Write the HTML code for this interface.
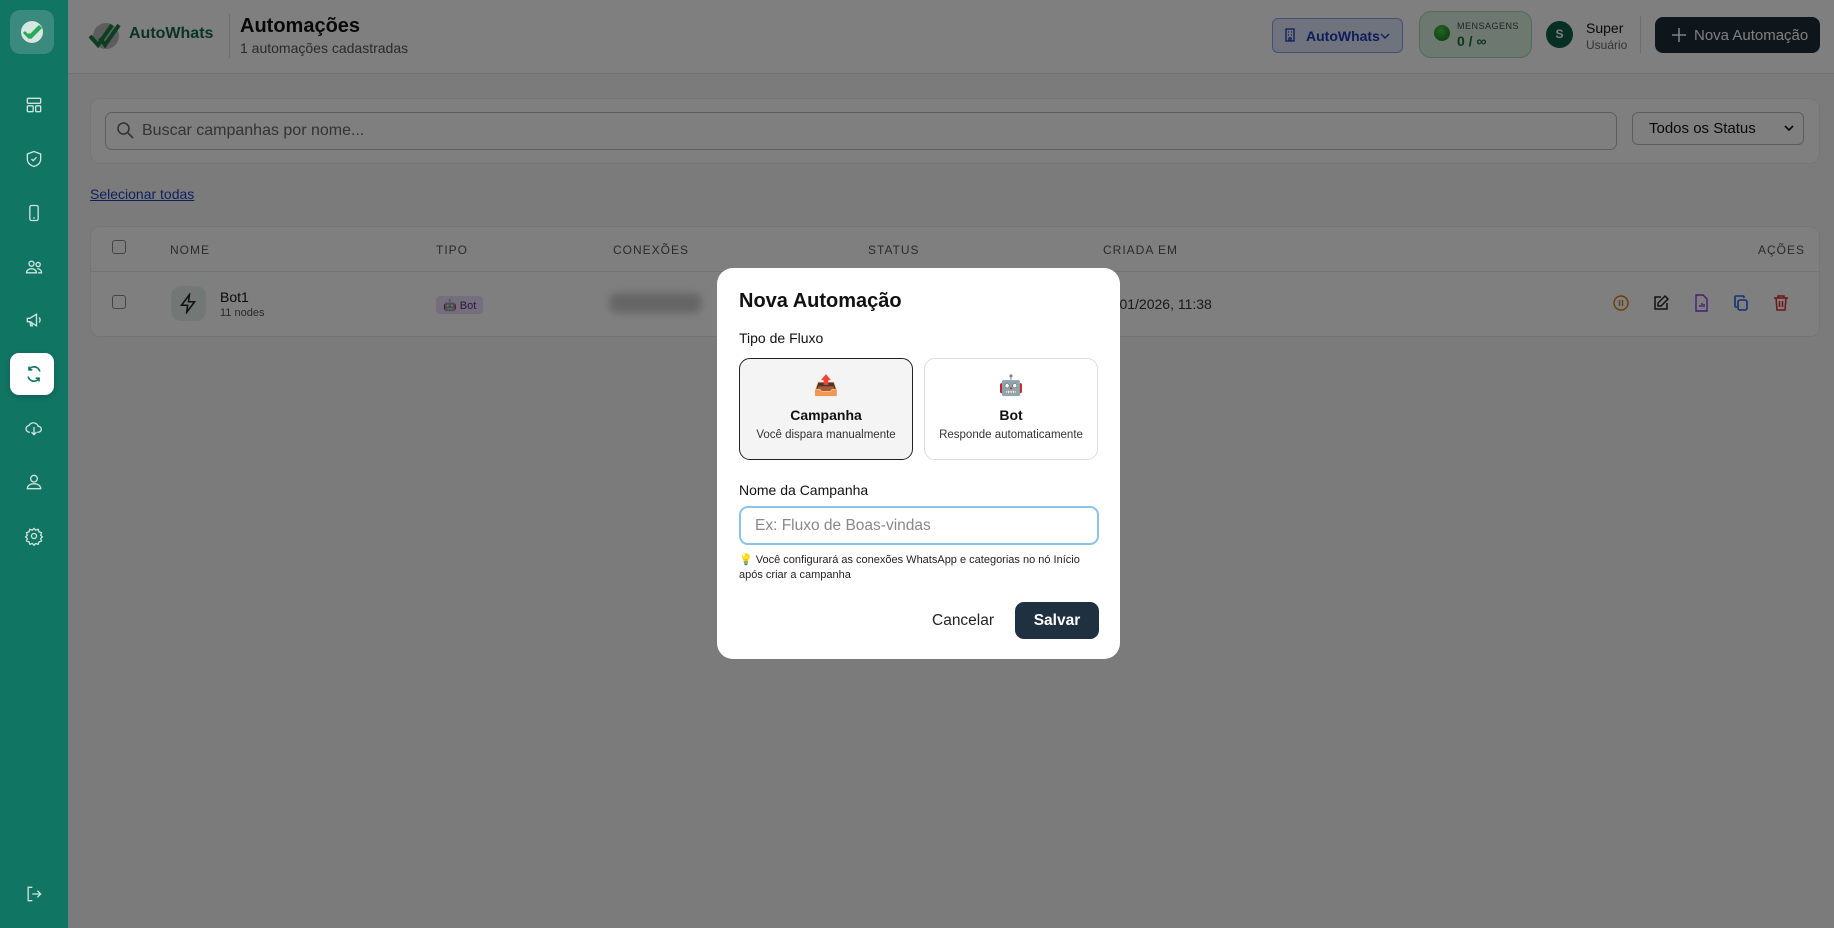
<!DOCTYPE html>
<html><head><meta charset="utf-8"><style>
*{box-sizing:border-box;margin:0;padding:0}
body{width:1834px;height:928px;overflow:hidden;position:relative;background:#f6f7f7;font-family:"Liberation Sans","Noto Sans CJK JP",sans-serif;color:#111}
.a{position:absolute}
#side{left:0;top:0;width:68px;height:928px;background:#117564;z-index:5}
.si{position:absolute;left:24px;width:20px;height:20px}
#hdr{left:68px;top:0;width:1766px;height:74px;background:#fff;border-bottom:1px solid #e4e4e4}
.card{background:#fff;border:1px solid #ebebeb;border-radius:10px}
.th{position:absolute;top:243px;font-size:12px;letter-spacing:1px;color:#555}
#ov{left:68px;top:0;width:1766px;height:928px;background:rgba(0,0,0,0.5);z-index:3}
#modal{left:717px;top:268px;width:403px;height:391px;background:#fff;border-radius:16px;z-index:4}
.tc{position:absolute;top:90px;width:174px;height:102px;border-radius:11px;text-align:center}
</style></head><body>
<div id="side" class="a">
 <div class="a" style="left:10px;top:10px;width:44px;height:44px;border-radius:10px;background:#3a8b7d"></div>
 <svg class="a" style="left:18px;top:18px" width="28" height="28" viewBox="0 0 28 28"><circle cx="14" cy="14" r="11" fill="#d6e6e2"/><path d="M6 14l5 5 11-11M10 16l3 3 10-10" stroke="#2aa85a" stroke-width="3" fill="none"/></svg>
 <svg class="si" style="top:95px" viewBox="0 0 24 24" fill="none" stroke="#cfe3de" stroke-width="1.6"><rect x="4" y="4" width="16" height="6" rx="1"/><rect x="4" y="13" width="7" height="7" rx="1"/><rect x="14" y="13" width="6" height="7" rx="1"/></svg>
 <svg class="si" style="top:149px" viewBox="0 0 24 24" fill="none" stroke="#cfe3de" stroke-width="1.6"><path d="M12 3l8 3v6c0 5-4 8-8 9-4-1-8-4-8-9V6z"/><path d="M9 12l2 2 4-4"/></svg>
 <svg class="si" style="top:203px" viewBox="0 0 24 24" fill="none" stroke="#cfe3de" stroke-width="1.6"><rect x="7" y="3" width="10" height="18" rx="2"/><path d="M11 18h2"/></svg>
 <svg class="si" style="top:257px" viewBox="0 0 24 24" fill="none" stroke="#cfe3de" stroke-width="1.6"><circle cx="9" cy="8" r="3"/><path d="M3 19c0-3 3-5 6-5s6 2 6 5z"/><circle cx="17" cy="9" r="2.5"/><path d="M16 14c3 0 5 2 5 5h-4"/></svg>
 <svg class="si" style="top:310px" viewBox="0 0 24 24" fill="none" stroke="#cfe3de" stroke-width="1.6"><path d="M4 10v4h3l8 5V5L7 10z"/><path d="M7 14l1 5h2l-1-5M18 9a4 4 0 010 6"/></svg>
 <div class="a" style="left:10px;top:353px;width:44px;height:42px;border-radius:9px;background:#fff;box-shadow:0 2px 6px rgba(0,0,0,.2)"></div>
 <svg class="si" style="left:24px;top:364px" viewBox="0 0 24 24" fill="none" stroke="#117564" stroke-width="2"><path d="M19 9a7 7 0 00-13-2M5 15a7 7 0 0013 2"/><path d="M6 3v4h4M18 21v-4h-4"/></svg>
 <svg class="si" style="top:418px" viewBox="0 0 24 24" fill="none" stroke="#cfe3de" stroke-width="1.6"><path d="M7 17a4 4 0 01-1-8 6 6 0 0111 1 3.5 3.5 0 01.5 7H16"/><path d="M12 11v9M9 17l3 3 3-3"/></svg>
 <svg class="si" style="top:472px" viewBox="0 0 24 24" fill="none" stroke="#cfe3de" stroke-width="1.6"><circle cx="12" cy="8" r="4"/><path d="M4 20c0-4 4-6 8-6s8 2 8 6z"/></svg>
 <svg class="si" style="top:526px" viewBox="0 0 24 24" fill="none" stroke="#cfe3de" stroke-width="1.6"><circle cx="12" cy="12" r="3"/><path d="M12 3l2 2 3-1 1 3 3 1-1 3 2 2-2 2 1 3-3 1-1 3-3-1-2 2-2-2-3 1-1-3-3-1 1-3-2-2 2-2-1-3 3-1 1-3 3 1z"/></svg>
 <svg class="si" style="top:884px" viewBox="0 0 24 24" fill="none" stroke="#cfe3de" stroke-width="1.6"><path d="M10 4H5v16h5M10 12h10M16 8l4 4-4 4"/></svg>
</div>

<div id="hdr" class="a">
 <svg class="a" style="left:20px;top:20px" width="40" height="30" viewBox="0 0 40 30"><circle cx="18" cy="16" r="13" fill="#bbb"/><path d="M2 16l8 9 14-20M12 18l5 7 14-20" stroke="#1d7d45" stroke-width="4" fill="none"/></svg>
 <div class="a" style="left:61px;top:25px;font-size:16px;font-weight:bold;color:#17664a">AutoWhats</div>
 <div class="a" style="left:161px;top:14px;width:1px;height:44px;background:#ddd"></div>
 <div class="a" style="left:172px;top:15px;font-size:20px;font-weight:bold;color:#111">Automações</div>
 <div class="a" style="left:172px;top:40px;font-size:14px;color:#555">1 automações cadastradas</div>
 <div class="a" style="left:1204px;top:18px;width:131px;height:35px;border:1px solid #8aa3e6;border-radius:6px;background:#dde6fb;color:#1e3bb0;font-size:14px;font-weight:bold;padding:9px 0 0 33px">AutoWhats</div>
 <svg class="a" style="left:1311px;top:31px" width="12" height="10" viewBox="0 0 12 10" fill="none" stroke="#1e3bb0" stroke-width="1.3"><path d="M2 3l4 4 4-4"/></svg>
 <svg class="a" style="left:1215px;top:28px" width="14" height="14" viewBox="0 0 14 14" fill="none" stroke="#1e3bb0" stroke-width="1.3"><rect x="3" y="1" width="8" height="12"/><path d="M5 4h1M8 4h1M5 7h1M8 7h1M6 13v-3h2v3"/></svg>
 <div class="a" style="left:1351px;top:11px;width:113px;height:47px;border:1px solid #9fdcb4;border-radius:12px;background:#d8f1e0"></div>
 <div class="a" style="left:1366px;top:25px;width:16px;height:16px;border-radius:50%;background:radial-gradient(circle at 40% 35%,#4cc24c,#0a7a10)"></div>
 <div class="a" style="left:1389px;top:21px;font-size:9px;letter-spacing:.5px;color:#444">MENSAGENS</div>
 <div class="a" style="left:1389px;top:33px;font-size:14px;font-weight:bold;color:#1a6a35">0 / ∞</div>
 <div class="a" style="left:1478px;top:21px;width:27px;height:27px;border-radius:50%;background:#0f5e48;color:#fff;font-size:12px;font-weight:bold;text-align:center;line-height:27px">S</div>
 <div class="a" style="left:1518px;top:20px;font-size:14px;color:#111">Super</div>
 <div class="a" style="left:1518px;top:38px;font-size:12px;color:#666">Usuário</div>
 <div class="a" style="left:1572px;top:16px;width:1px;height:38px;background:#ddd"></div>
 <div class="a" style="left:1587px;top:17px;width:165px;height:36px;border-radius:8px;background:#1c2a36;color:#fff;font-size:15px;padding:10px 0 0 39px;white-space:nowrap">Nova Automação</div>
 <svg class="a" style="left:1603px;top:27px" width="16" height="16" viewBox="0 0 16 16" stroke="#fff" stroke-width="1.6"><path d="M8 1v14M1 8h14"/></svg>
</div>

<div class="a card" style="left:90px;top:98px;width:1730px;height:66px"></div>
<div class="a" style="left:105px;top:112px;width:1512px;height:38px;border:1px solid #bbb;border-radius:7px;background:#fff;font-size:16px;color:#666;padding:9px 0 0 36px">Buscar campanhas por nome...</div>
<svg class="a" style="left:116px;top:121px" width="18" height="18" viewBox="0 0 18 18" fill="none" stroke="#666" stroke-width="1.6"><circle cx="7.5" cy="7.5" r="5.5"/><path d="M12 12l5 5"/></svg>
<div class="a" style="left:1632px;top:112px;width:172px;height:33px;border:1px solid #bbb;border-radius:6px;background:#fff;font-size:15px;color:#111;padding:7px 0 0 16px">Todos os Status</div>
<svg class="a" style="left:1784px;top:124px" width="10" height="8" viewBox="0 0 10 8" fill="none" stroke="#111" stroke-width="1.6"><path d="M1 2l4 4 4-4"/></svg>
<div class="a" style="left:90px;top:186px;font-size:14px;color:#1e40c0;text-decoration:underline">Selecionar todas</div>

<div class="a card" style="left:90px;top:226px;width:1730px;height:111px"></div>
<div class="a" style="left:90px;top:271px;width:1730px;height:1px;background:#e7e7e7"></div>
<div class="a" style="left:112px;top:240px;width:14px;height:14px;border:1px solid #888;border-radius:3px;background:#fff"></div>
<div class="th" style="left:170px">NOME</div><div class="th" style="left:436px">TIPO</div><div class="th" style="left:613px">CONEXÕES</div><div class="th" style="left:868px">STATUS</div><div class="th" style="left:1103px">CRIADA EM</div><div class="th" style="left:1758px">AÇÕES</div>
<div class="a" style="left:112px;top:295px;width:14px;height:14px;border:1px solid #888;border-radius:3px;background:#fff"></div>
<div class="a" style="left:171px;top:286px;width:35px;height:35px;border-radius:10px;background:#e6f0ee"></div>
<svg class="a" style="left:178px;top:293px" width="21" height="21" viewBox="0 0 24 24" fill="none" stroke="#222" stroke-width="1.8"><path d="M13 2L4 14h7l-1 8 9-12h-7z"/></svg>
<div class="a" style="left:220px;top:289px;font-size:14px">Bot1</div>
<div class="a" style="left:220px;top:307px;font-size:11px;color:#555">11 nodes</div>
<div class="a" style="left:436px;top:296px;width:47px;height:18px;border-radius:4px;background:#eadcfa;font-size:11px;color:#5b2a90;padding:3px 0 0 7px">🤖 Bot</div>
<div class="a" style="left:609px;top:293px;width:93px;height:20px;border-radius:8px;background:#ccc;filter:blur(4px)"></div>
<div class="a" style="left:1100px;top:296px;font-size:14px;color:#333">20/01/2026, 11:38</div>
<svg class="a" style="left:1612px;top:294px" width="18" height="18" viewBox="0 0 18 18" fill="none" stroke="#d07a10" stroke-width="1.4"><circle cx="9" cy="9" r="7"/><path d="M7.5 6v6M10.5 6v6"/></svg>
<svg class="a" style="left:1652px;top:294px" width="18" height="18" viewBox="0 0 18 18" fill="none" stroke="#222" stroke-width="1.5"><path d="M9 3H3v12h12V9"/><path d="M13 2l3 3-7 7H6V9z"/></svg>
<svg class="a" style="left:1692px;top:294px" width="18" height="18" viewBox="0 0 18 18" fill="none" stroke="#8a3ce0" stroke-width="1.4"><path d="M4 1h7l4 4v12H4z"/><path d="M8 13v-2M10 13v-4M12 13v-3"/></svg>
<svg class="a" style="left:1732px;top:294px" width="18" height="18" viewBox="0 0 18 18" fill="none" stroke="#2a5ee0" stroke-width="1.6"><rect x="6" y="6" width="9" height="10" rx="2"/><path d="M12 4V3a1 1 0 00-1-1H4a1 1 0 00-1 1v9a1 1 0 001 1h1"/></svg>
<svg class="a" style="left:1772px;top:294px" width="18" height="18" viewBox="0 0 18 18" fill="none" stroke="#e02a2a" stroke-width="1.5"><path d="M2 4h14M6 4V2h6v2M4 4l1 12h8l1-12M7.5 7v6M10.5 7v6"/></svg>

<div id="ov" class="a"></div>

<div id="modal" class="a">
 <div class="a" style="left:22px;top:22px;font-size:20px;font-weight:bold">Nova Automação</div>
 <div class="a" style="left:22px;top:62px;font-size:14px;color:#111">Tipo de Fluxo</div>
 <div class="tc" style="left:22px;border:1px solid #222;background:#f4f4f4">
  <div style="margin-top:15px;font-size:20px;line-height:24px">📤</div>
  <div style="margin-top:9px;font-size:14px;font-weight:bold">Campanha</div>
  <div style="margin-top:6px;font-size:11.5px;color:#333">Você dispara manualmente</div>
 </div>
 <div class="tc" style="left:207px;border:1px solid #ddd;background:#fff">
  <div style="margin-top:15px;font-size:20px;line-height:24px">🤖</div>
  <div style="margin-top:9px;font-size:14px;font-weight:bold">Bot</div>
  <div style="margin-top:6px;font-size:11.5px;color:#333">Responde automaticamente</div>
 </div>
 <div class="a" style="left:22px;top:214px;font-size:14px">Nome da Campanha</div>
 <div class="a" style="left:22px;top:238px;width:360px;height:39px;border:2px solid #8cc3e8;border-radius:9px;font-size:15.5px;color:#888;padding:9px 0 0 14px">Ex: Fluxo de Boas-vindas</div>
 <div class="a" style="left:22px;top:285px;width:360px;font-size:11px;line-height:15px;color:#222">💡 Você configurará as conexões WhatsApp e categorias no nó Início após criar a campanha</div>
 <div class="a" style="left:215px;top:344px;font-size:15.5px;color:#222">Cancelar</div>
 <div class="a" style="left:298px;top:334px;width:84px;height:37px;border-radius:9px;background:#1f3140;color:#fff;font-size:15.5px;font-weight:bold;text-align:center;line-height:37px">Salvar</div>
</div>
</body></html>
